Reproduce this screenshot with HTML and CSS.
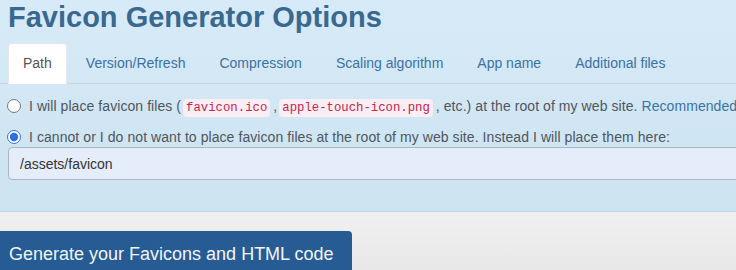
FILE: index.html
```html
<!DOCTYPE html>
<html lang="en">
<head>
    <meta charset="UTF-8">
    <meta name="viewport" content="width=device-width, initial-scale=1.0">
    <title>Favicon Generator Options</title>
    <link rel="stylesheet" href="styles.css">
</head>
<body>

    <div class="fg-panel">
        <h1>Favicon Generator Options</h1>

        <ul class="fg-tabs">
            <li class="fg-active"><a href="#">Path</a></li>
            <li><a href="#">Version/Refresh</a></li>
            <li><a href="#">Compression</a></li>
            <li><a href="#">Scaling algorithm</a></li>
            <li><a href="#">App name</a></li>
            <li><a href="#">Additional files</a></li>
        </ul>

        <div class="fg-tab-body">
            <label class="fg-radio">
                <input type="radio" name="fg-path">
                I will place favicon files (<code>favicon.ico</code>,<code>apple-touch-icon.png</code>, etc.) at the root of my web site. <a href="#">Recommended</a>
            </label>
            <label class="fg-radio fg-radio-last">
                <input type="radio" name="fg-path" checked>
                I cannot or I do not want to place favicon files at the root of my web site. Instead I will place them here:
            </label>
            <input class="fg-path-input" type="text" value="/assets/favicon">
        </div>
    </div>

    <div class="fg-footer">
        <button class="fg-btn-generate">Generate your Favicons and HTML code</button>
    </div>

</body>
</html>
```

FILE: styles.css
```css
:root {
    --title-color: #39698f;
    --link-color: #3b72a6;
    --text-color: #4f565e;
    --panel-bg: #d6e9f8;
    --button-bg: #265b93;
}

body {
    font-family: "Liberation Sans", Arial, sans-serif;
    font-size: 14px;
    color: var(--text-color);
    background-color: #ececec;
    margin: 0;
    padding: 0;
    overflow: hidden;
    height: 270px;
}

.fg-panel {
    width: 780px;
    padding: 0 0 31px 8px;
    background: linear-gradient(#d7eaf8, #cde3f0);
    border-bottom: 1px solid #bdd7e5;
}

h1 {
    margin: 0;
    font-size: 29px;
    line-height: 34px;
    font-weight: bold;
    color: var(--title-color);
}

.fg-tabs {
    list-style: none;
    display: flex;
    margin: 9px 0 0 -8px;
    padding: 0 0 0 8px;
    border-bottom: 1px solid #c6d5df;
}

.fg-tabs li {
    margin-right: 4px;
    margin-bottom: -1px;
}

.fg-tabs a {
    display: block;
    padding: 0 15px;
    line-height: 40px;
    color: var(--link-color);
    text-decoration: none;
    border-radius: 4px 4px 0 0;
}

.fg-tabs .fg-active a {
    background-color: #fff;
    color: #555;
    border: 1px solid #e3e9ee;
    border-bottom-color: #fff;
    line-height: 39px;
    padding: 0 14px;
}

.fg-tab-body {
    padding-top: 12px;
}

.fg-radio {
    display: block;
    height: 20px;
    line-height: 20px;
    white-space: nowrap;
    letter-spacing: 0.07px;
    margin-bottom: 11px;
}

.fg-radio-last {
    margin-bottom: 0;
}

.fg-radio input {
    width: 14px;
    height: 14px;
    margin: 0 4px 0 -1px;
    vertical-align: -2px;
    accent-color: #2f6fe6;
}

.fg-radio code {
    font-family: "Liberation Mono", "Courier New", monospace;
    font-size: 12.3px;
    letter-spacing: 0;
    color: #c7254e;
    background-color: #f8eef3;
    padding: 2px 3px;
    border-radius: 4px;
    margin: 0 3px 0 2px;
}

.fg-radio a {
    color: var(--link-color);
    text-decoration: none;
}

.fg-path-input {
    display: block;
    box-sizing: border-box;
    width: 780px;
    height: 33px;
    padding: 0 11px;
    font-family: inherit;
    font-size: 14px;
    color: #333;
    background-color: #e5edfa;
    border: 1px solid #abb5c3;
    border-radius: 4px;
}

.fg-footer {
    background: linear-gradient(#f0f0f0, #e8e8e8);
    padding-top: 19px;
    height: 39px;
    overflow: hidden;
}

.fg-btn-generate {
    margin-left: -9px;
    padding: 11px 18px;
    font-family: inherit;
    font-size: 18px;
    line-height: 1.43;
    color: #f2f5f9;
    background-color: var(--button-bg);
    border: none;
    border-radius: 4px;
    cursor: pointer;
}
```
